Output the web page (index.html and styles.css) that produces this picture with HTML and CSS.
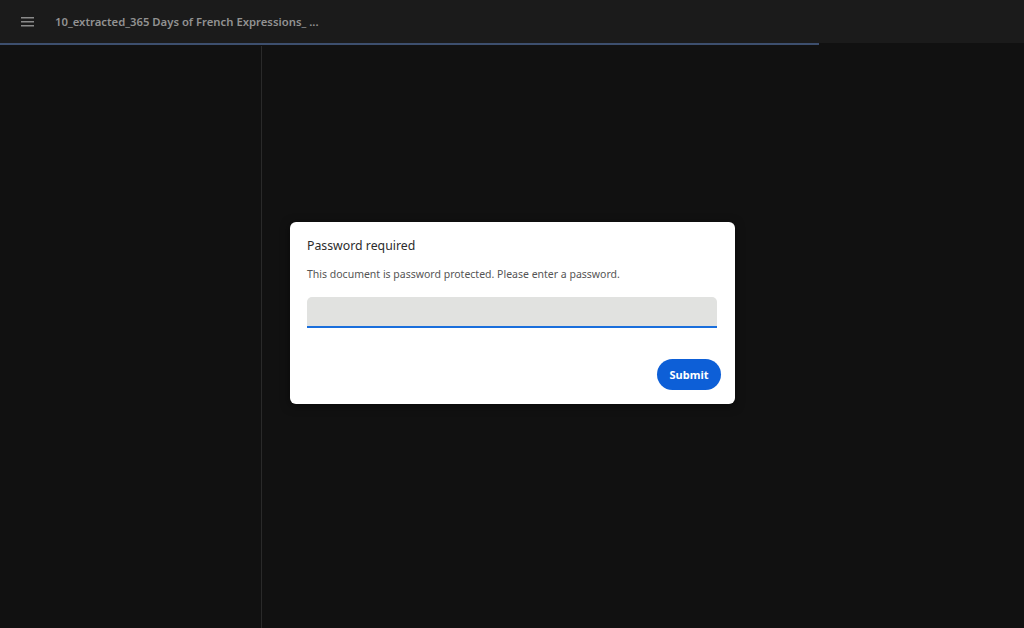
FILE: index.html
```html
<!DOCTYPE html>
<html>
<head>
<meta charset="utf-8">
<link rel="stylesheet" href="styles.css">
</head>
<body>
<div class="app">
  <header class="topbar">
    <div class="menu-btn">
      <svg width="14" height="10" viewBox="0 0 14 10"><rect x="0" y="0" width="13" height="1.5" fill="#8a8a8a"/><rect x="0" y="4" width="13" height="1.5" fill="#8a8a8a"/><rect x="0" y="8" width="13" height="1.5" fill="#8a8a8a"/></svg>
    </div>
    <div class="title">10_extracted_365 Days of French Expressions_ ...</div>
    <div class="progress"><div class="progress-fill"></div></div>
  </header>
  <main class="main">
    <aside class="sidebar"></aside>
    <section class="viewer">
      <div class="dialog">
        <div class="dlg-title">Password required</div>
        <div class="dlg-text">This document is password protected. Please enter a password.</div>
        <div class="field"></div>
        <div class="actions"><button class="submit">Submit</button></div>
      </div>
    </section>
  </main>
</div>
</body>
</html>
```
FILE: styles.css
```css
* { box-sizing: border-box; }
html, body { margin: 0; padding: 0; height: 100%; }
body { background: #111111; font-family: "Noto Sans", "Open Sans", sans-serif; }
.app { display: flex; flex-direction: column; height: 628px; width: 1024px; }
.topbar { height: 46px; background: #1b1b1b; display: flex; align-items: center; position: relative; flex: none; }
.menu-btn { width: 55px; flex: none; padding-left: 21px; margin-top: -3px; }
.menu-btn svg { display: block; }
.title { color: #929292; font-size: 11.3px; font-weight: 600; margin-top: -3px; }
.progress { position: absolute; left: 0; right: 0; bottom: 0; height: 3px; background: #111111; }
.progress-fill { width: 819px; height: 2px; background: #3d4f6e; }
.main { flex: 1; display: flex; }
.sidebar { width: 262px; border-right: 1px solid #2a2a2a; flex: none; }
.viewer { flex: 1; position: relative; }
.dialog { position: absolute; left: 28px; top: 176px; width: 445px; height: 182px; background: #ffffff; border-radius: 6px; padding: 15px 17px 14px 17px; display: flex; flex-direction: column; box-shadow: 0 2px 10px rgba(0,0,0,0.5); }
.dlg-title { font-size: 12.3px; color: #2c2c2c; line-height: 18px; }
.dlg-text { font-size: 10.5px; color: #555; margin-top: 12px; line-height: 14px; }
.field { margin-top: 16px; height: 31px; width: 410px; background: #e1e2e0; border-radius: 5px 5px 0 0; border-bottom: 2px solid #1a6fdc; }
.actions { display: flex; justify-content: flex-end; margin-top: 31px; margin-right: -3px; }
.submit { height: 31px; width: 64px; border: none; border-radius: 16px; background: #0d5fd7; color: #fff; font-family: "Noto Sans", sans-serif; font-weight: 700; font-size: 11px; padding: 0; }
```
